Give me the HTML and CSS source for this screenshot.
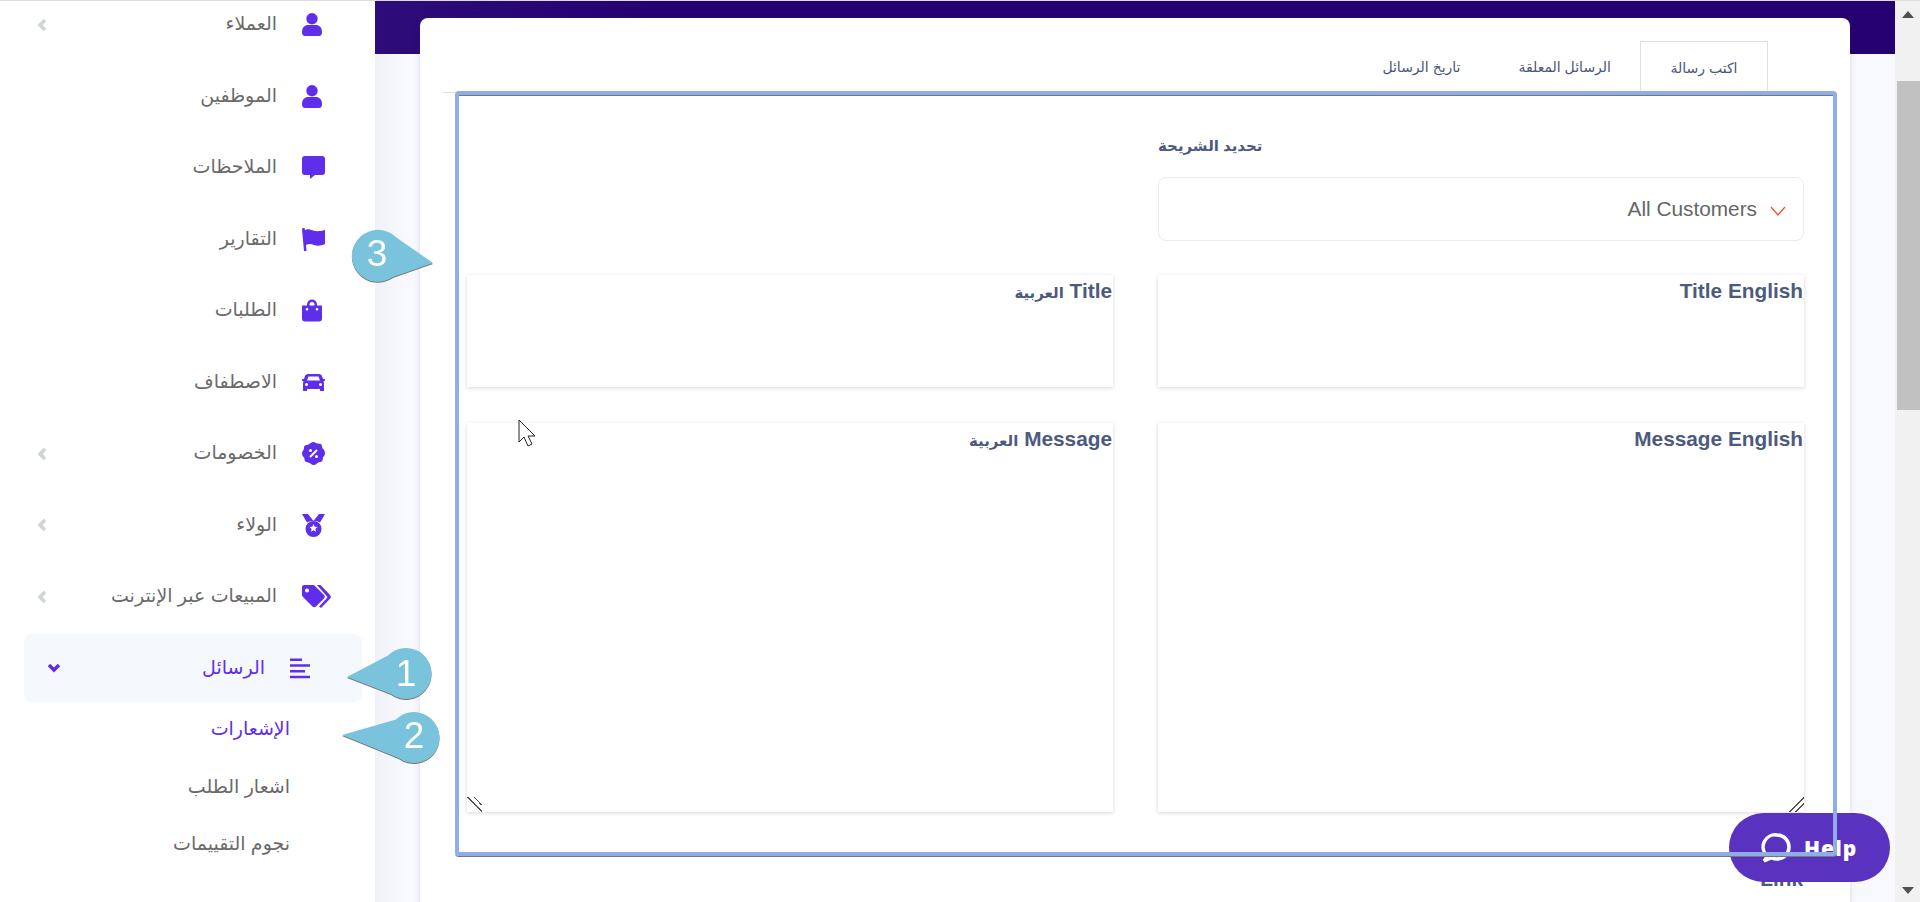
FILE: index.html
```html
<!DOCTYPE html>
<html lang="ar">
<head>
    <meta charset="UTF-8">
    <title>الإشعارات</title>
    <link rel="stylesheet" href="styles.css">
</head>
<body>
    <div class="page">
        <aside class="sidebar" dir="rtl">
            <a class="nav-item">
                <svg class="icon" viewBox="0 0 30 23"><circle cx="10" cy="5.700" r="5.700"/><path d="M0 19c0-4.500 3-7 6-7h8c3 0 6 2.500 6 7 0 2.500-1 4-3 4H3c-2 0-3-1.500-3-4z"/></svg>
                <span>العملاء</span>
                <svg class="caret" viewBox="0 0 10 14"><path d="M8 2 3 7l5 5"/></svg>
            </a>
            <a class="nav-item">
                <svg class="icon" viewBox="0 0 30 23"><circle cx="10" cy="5.700" r="5.700"/><path d="M0 19c0-4.500 3-7 6-7h8c3 0 6 2.500 6 7 0 2.500-1 4-3 4H3c-2 0-3-1.500-3-4z"/></svg>
                <span>الموظفين</span>
            </a>
            <a class="nav-item">
                <svg class="icon" viewBox="0 0 30 23"><path d="M3 0h17a3 3 0 0 1 3 3v13a3 3 0 0 1-3 3h-7l-5 4v-4H3a3 3 0 0 1-3-3V3a3 3 0 0 1 3-3z"/></svg>
                <span>الملاحظات</span>
            </a>
            <a class="nav-item">
                <svg class="icon" viewBox="0 0 30 23"><path d="M1 0h1.500l.5 2c3-1.500 5-.5 8 .5s7 1 12-.5v14c-4 2-8 2-11 1s-5-1.500-8 0l.5 6H2L0 1z"/></svg>
                <span>التقارير</span>
            </a>
            <a class="nav-item">
                <svg class="icon" viewBox="0 -.5 30 23"><path fill-rule="evenodd" d="M5 6V5a5 5 0 0 1 10 0v1h5v13a3 3 0 0 1-3 3H3a3 3 0 0 1-3-3V6zm2.500 0h5V5a2.500 2.500 0 0 0-5 0zM5 8.500a1.300 1.300 0 1 0 0 2.600 1.300 1.300 0 0 0 0-2.600zm10 0a1.300 1.300 0 1 0 0 2.600 1.300 1.300 0 0 0 0-2.600z"/></svg>
                <span>الطلبات</span>
            </a>
            <a class="nav-item">
                <svg class="icon" viewBox="0 -3 30 23"><path fill-rule="evenodd" d="M6 0h11c1.500 0 2.500 1 3 2l1 3h2v1.500l-1.500 1 .5 2V17h-4v-2H5v2H1V9.500l.5-2L0 6.500V5h2l1-3c.5-1 1.500-2 3-2zm.5 2.500L5 6.500h13l-1.500-4zM4.500 9a1.500 1.500 0 1 0 0 3 1.500 1.500 0 0 0 0-3zm14 0a1.500 1.500 0 1 0 0 3 1.500 1.500 0 0 0 0-3z"/></svg>
                <span>الاصطفاف</span>
            </a>
            <a class="nav-item">
                <svg class="icon" viewBox="0 0 30 23"><path d="M11.500 0c1.800 0 2.600 1.200 3.800 1.500 1.300.3 2.600-.2 3.800.8 1.100 1 .7 2.300 1.200 3.500.5 1.200 2.700 2 2.700 5.700 0 2-1.500 2.800-2 4-.5 1.300 0 2.600-1 3.800-1.100 1.100-2.400.7-3.600 1.200-1.200.5-2.400 2.500-4.900 2.500-2 0-3.200-1.800-4.400-2.300-1.300-.5-2.700 0-3.800-1.200-1.100-1.100-.6-2.500-1.100-3.700C1.200 14.500 0 13.500 0 11.500c0-2 1.300-2.900 1.800-4.200.4-1.200 0-2.600 1-3.700C4 2.500 5.300 3 6.500 2.400 7.800 1.800 9.500 0 11.500 0z"/><path class="cut" d="m8 15 7-7"/><circle class="cut-dot" cx="8.500" cy="8.500" r="1.500"/><circle class="cut-dot" cx="14.500" cy="14.500" r="1.500"/></svg>
                <span>الخصومات</span>
                <svg class="caret" viewBox="0 0 10 14"><path d="M8 2 3 7l5 5"/></svg>
            </a>
            <a class="nav-item">
                <svg class="icon" viewBox="0 0 30 23"><path d="M0 0h6l5.500 7L17 0h6l-5 8.500-3.500-1.500h-6L5 8.500z"/><path fill-rule="evenodd" d="M11.500 7a8 8 0 1 1 0 16 8 8 0 0 1 0-16zm0 3 1.200 2.700 2.800.3-2.100 1.900.6 2.900-2.500-1.500-2.500 1.500.6-2.900L7.500 13l2.800-.3z"/></svg>
                <span>الولاء</span>
                <svg class="caret" viewBox="0 0 10 14"><path d="M8 2 3 7l5 5"/></svg>
            </a>
            <a class="nav-item">
                <svg class="icon" viewBox="0 0 30 23"><path fill-rule="evenodd" d="M2 0h9c1 0 1.500.5 2 1l9 9c1 1 1 2.500 0 3.500l-8 8c-1 1-2.500 1-3.500 0l-9-9c-.9-.9-1.500-1.500-1.500-3V2C0 1 1 0 2 0zm3 3.500a2 2 0 1 0 0 4 2 2 0 0 0 0-4z"/><path d="M15 0h2.500c1 0 1.500.5 2 1l8.500 9c1 1 1.200 2.400.2 3.500L19 23l-2-1.500 8-8.500c.5-.5.5-1 0-1.500z"/></svg>
                <span>المبيعات عبر الإنترنت</span>
                <svg class="caret" viewBox="0 0 10 14"><path d="M8 2 3 7l5 5"/></svg>
            </a>
            <a class="nav-item active">
                <svg class="icon" viewBox="0 -1.500 30 23"><path d="M0 0h12v2.400H0zM0 5.800h20v2.400H0zM0 11.500h15v2.400H0zM0 17.300h20v2.400H0z"/></svg>
                <span>الرسائل</span>
                <svg class="caret-open" viewBox="0 0 14 10"><path d="m2 2 5 5 5-5"/></svg>
            </a>
            <ul class="sub-menu">
                <li class="current">الإشعارات</li>
                <li>اشعار الطلب</li>
                <li>نجوم التقييمات</li>
            </ul>
            <a class="nav-item">
                <svg class="icon" viewBox="0 0 30 23"><circle cx="10" cy="5.700" r="5.700"/></svg>
            </a>
        </aside>

        <main class="content">
            <div class="top-band"></div>
            <section class="card">
                <nav class="tabs" dir="rtl">
                    <a class="tab selected">اكتب رسالة</a>
                    <a class="tab">الرسائل المعلقة</a>
                    <a class="tab">تاريخ الرسائل</a>
                </nav>
                <form class="form-grid">
                    <div></div>
                    <div class="segment">
                        <label class="segment-label">تحديد الشريحة</label>
                        <div class="select-box">
                            <span>All Customers</span>
                            <svg class="select-arrow" viewBox="0 0 16 10"><path d="m1 1 7 8 7-8"/></svg>
                        </div>
                    </div>
                    <div class="field short" dir="rtl">
                        <label>Title <span class="ar">العربية</span></label>
                        <textarea></textarea>
                    </div>
                    <div class="field short en">
                        <label>Title English</label>
                        <textarea></textarea>
                    </div>
                    <div class="field long" dir="rtl">
                        <label>Message <span class="ar">العربية</span></label>
                        <textarea></textarea>
                    </div>
                    <div class="field long en">
                        <label>Message English</label>
                        <textarea></textarea>
                    </div>
                    <div></div>
                    <label class="link-label">Link</label>
                </form>
            </section>
        </main>

        <div class="scrollbar">
            <span class="arrow-up"></span>
            <span class="thumb"></span>
            <span class="arrow-down"></span>
        </div>
    </div>

    <!-- annotations drawn over the screenshot -->
    <a class="help">
        <svg class="help-icon" viewBox="0 0 32 32"><path d="M17 3a12 12 0 0 1 0 24c-2 0-4-.5-5.500-1.300L4 29c1.500-1.500 2.500-3 2.800-5.500A12 12 0 0 1 17 3z"/></svg>
        <span>Help</span>
    </a>
    <div class="frame"></div>

    <svg class="bubble bubble-1" viewBox="0 0 100 70"><path d="M7 37 48 15.500A25.500 25.500 0 1 1 51 54.100z"/><text x="66" y="46">1</text></svg>
    <svg class="bubble bubble-2" viewBox="0 0 110 65"><path d="M7 30 61 14.500A25.500 25.500 0 1 1 64 53.200z"/><text x="79" y="43">2</text></svg>
    <svg class="bubble bubble-3" viewBox="0 0 95 65"><path d="M88 38 48 52A26 26 0 1 1 51.400 12.600z"/><text x="32" y="41">3</text></svg>

    <svg class="cursor" viewBox="0 0 18 28"><path d="M1 1v22l5-5 4 9 4-2-4-8h7z"/></svg>
</body>
</html>
```

FILE: styles.css
```css
/* General */
html, body {
    margin: 0;
    padding: 0;
    height: 902px;
    overflow: hidden;
}

body {
    font-family: "Liberation Sans", "DejaVu Sans", sans-serif;
    background: #fff;
    color: #555;
}

.page {
    display: flex;
    height: 901px;
    border-top: 1px solid #ddd;
    overflow: hidden;
}

/* Sidebar */
.sidebar {
    width: 375px;
    flex: none;
    background: #fff;
    padding: 0 13px 0 24px;
    box-sizing: border-box;
    margin-top: -10.5px;
}

.nav-item {
    display: flex;
    align-items: center;
    height: 68px;
    margin-bottom: 3.5px;
    padding-right: 30px;
    box-sizing: border-box;
    font-size: 19px;
    color: #6a6a6a;
    border-radius: 8px;
}

.nav-item span {
    margin-right: 25px;
    margin-bottom: 2px;
}

.icon {
    width: 30px;
    height: 23px;
    flex: none;
    fill: #5f2eea;
}

.icon .cut {
    fill: none;
    stroke: #fff;
    stroke-width: 2;
}

.icon .cut-dot {
    fill: #fff;
}

.caret {
    width: 10px;
    height: 14px;
    margin-right: auto;
    margin-left: 13px;
    fill: none;
    stroke: #cfd3da;
    stroke-width: 3.5;
}

.nav-item.active {
    background: #f5f8fc;
    color: #5f2eea;
    padding-right: 42px;
}

.caret-open {
    width: 14px;
    height: 10px;
    margin-right: auto;
    margin-left: 23px;
    fill: none;
    stroke: #5f2eea;
    stroke-width: 3.5;
}

.sub-menu {
    list-style: none;
    margin: -4.5px 0 7px;
    padding: 0 72px 0 0;
    font-size: 19px;
}

.sub-menu li {
    height: 57.5px;
    line-height: 55px;
    color: #6a6a6a;
}

.sub-menu li.current {
    color: #5f2eea;
}

/* Main */
.content {
    flex: 1;
    min-width: 0;
    background: linear-gradient(90deg, #f1f2f8 0, #f8f9fe 30px);
}

.top-band {
    height: 53px;
    background: linear-gradient(90deg, #2c0d7a 0, #250070 300px);
}

.card {
    margin: -36px 45px 0;
    height: 900px;
    padding: 23px 23px 0;
    box-sizing: border-box;
    background: #fff;
    border-radius: 8px;
    box-shadow: 0 0 6px rgba(60, 60, 100, 0.16);
    position: relative;
}

.tabs {
    display: flex;
    height: 52px;
    padding-right: 59px;
    border-bottom: 1px solid #dee2e6;
    box-sizing: border-box;
}

.tab {
    padding: 0 29px;
    display: flex;
    align-items: center;
    justify-content: center;
    font-size: 14px;
    color: #4a5578;
    box-sizing: border-box;
}

.tab.selected {
    width: 128px;
    height: 52px;
    padding: 0;
    background: #fff;
    border: 1px solid #dee2e6;
    border-bottom: none;
}

.form-grid {
    display: grid;
    grid-template-columns: 646px 646px;
    column-gap: 45px;
    padding-left: 24px;
}

.segment-label {
    display: block;
    font-size: 15px;
    font-weight: bold;
    color: #4d5a80;
    height: 84px;
    padding-top: 44px;
    box-sizing: border-box;
}

.select-box {
    height: 64px;
    border: 1px solid #e9ebef;
    border-radius: 8px;
    box-sizing: border-box;
    display: flex;
    align-items: center;
    justify-content: flex-end;
    padding-right: 17px;
    font-size: 20.8px;
    color: #666;
}

.select-arrow {
    width: 16px;
    height: 10px;
    margin-left: 13px;
    margin-top: 4px;
    fill: none;
    stroke: #f0532d;
    stroke-width: 1.3;
}

/* Text fields */
.field {
    display: flex;
    flex-direction: column;
    background: #fff;
    box-shadow: 0 1px 4px rgba(60, 60, 100, 0.2);
}

.field.short {
    height: 112px;
    margin-top: 34px;
}

.field.long {
    height: 389px;
    margin-top: 36px;
}

.field label {
    padding: 0 1px;
    font-size: 20.8px;
    font-weight: bold;
    line-height: 31px;
    color: #4d5a80;
}

.field.en label {
    text-align: right;
}

.field .ar {
    font-size: 15px;
}

textarea {
    display: block;
    flex: 1;
    width: 100%;
    min-height: 0;
    margin: 0;
    padding: 0;
    border: none;
    outline: none;
    box-sizing: border-box;
    background: transparent;
    resize: none;
}

.field.long textarea {
    resize: vertical;
}

textarea::-webkit-resizer {
    background: linear-gradient(135deg, transparent 48%, #555 48%, #555 54%, transparent 54%, transparent 70%, #555 70%, #555 76%, transparent 76%);
}

.field[dir="rtl"] textarea::-webkit-resizer {
    background: linear-gradient(45deg, transparent 48%, #555 48%, #555 54%, transparent 54%, transparent 70%, #555 70%, #555 76%, transparent 76%);
}

.link-label {
    margin-top: 55px;
    text-align: right;
    padding-right: 1px;
    font-size: 20.8px;
    font-weight: bold;
    color: #4d5a80;
}

/* Scrollbar */
.scrollbar {
    width: 25px;
    flex: none;
    position: relative;
    background: #f1f1f1;
    display: flex;
    flex-direction: column;
    align-items: flex-end;
}

.arrow-up {
    width: 0;
    height: 0;
    margin: 10px 6px 0 0;
    border: 6px solid transparent;
    border-top: none;
    border-bottom: 7px solid #505050;
}

.thumb {
    width: 23px;
    height: 329px;
    margin-top: 63px;
    background: #c1c1c1;
}

.arrow-down {
    width: 0;
    height: 0;
    margin: auto 6px 8px 0;
    border: 6px solid transparent;
    border-bottom: none;
    border-top: 7px solid #505050;
}

/* Overlays */
.help {
    position: absolute;
    left: 1729px;
    top: 813px;
    width: 161px;
    height: 69px;
    border-radius: 35px;
    background: #5932c0;
    display: flex;
    align-items: center;
    color: #fff;
    font-family: "Open Sans", sans-serif;
    font-size: 21px;
    font-weight: 800;
    letter-spacing: 1px;
}

.help-icon {
    width: 32px;
    height: 32px;
    margin: 0 12px 0 31px;
    fill: none;
    stroke: #fff;
    stroke-width: 3.5;
}

.frame {
    position: absolute;
    left: 455px;
    top: 91px;
    width: 1382px;
    height: 765px;
    box-sizing: border-box;
    border: 4px solid #8fade9;
    border-radius: 4px;
    box-shadow: 0 1px 0 #777, inset 0 1px 0 #777;
}

.bubble {
    position: absolute;
    fill: #79c3dc;
    filter: drop-shadow(0 1px 0 #777);
    overflow: visible;
}

.bubble text {
    fill: #fff;
    font-family: "Liberation Sans", sans-serif;
    font-size: 37px;
    text-anchor: middle;
}

.bubble-1 {
    left: 340px;
    top: 640px;
    width: 100px;
    height: 70px;
}

.bubble-2 {
    left: 335px;
    top: 705px;
    width: 110px;
    height: 65px;
}

.bubble-3 {
    left: 345px;
    top: 225px;
    width: 95px;
    height: 65px;
}

.cursor {
    position: absolute;
    left: 518px;
    top: 419px;
    width: 18px;
    height: 28px;
    fill: #fff;
    stroke: #222;
    stroke-width: 1;
}
```
